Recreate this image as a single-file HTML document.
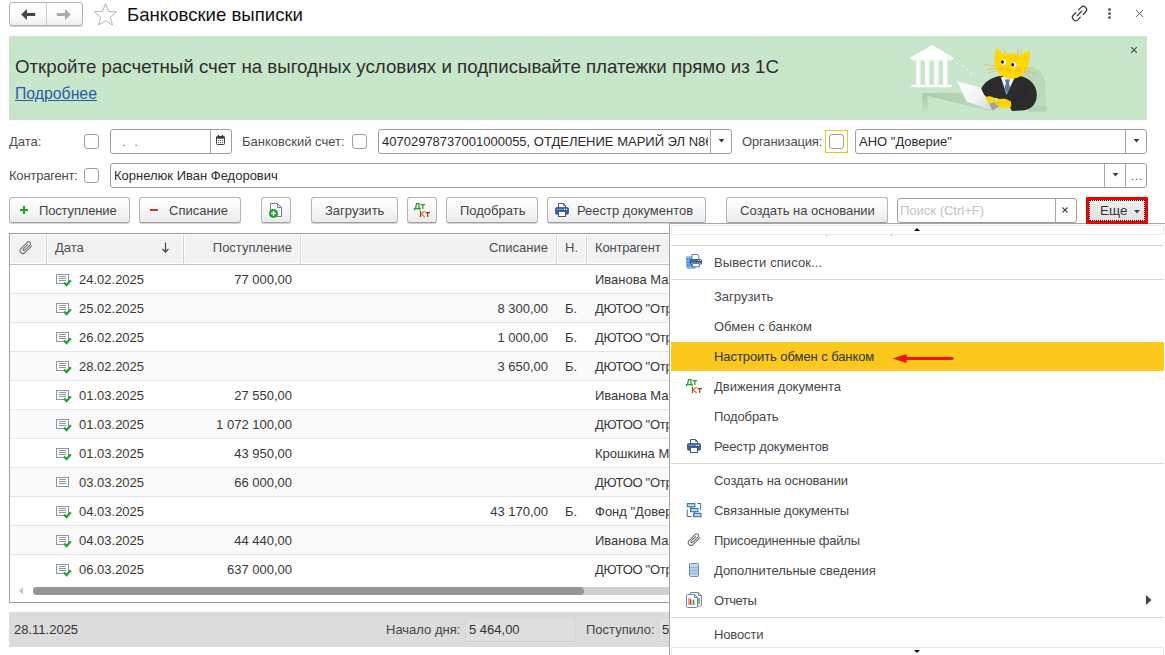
<!DOCTYPE html>
<html><head><meta charset="utf-8">
<style>
*{box-sizing:border-box;margin:0;padding:0}
html,body{width:1165px;height:655px;overflow:hidden;background:#fff}
body{font-family:"Liberation Sans",sans-serif;font-size:13px;color:#3c3c3c;position:relative}
.a{position:absolute}
.t{position:absolute;white-space:nowrap;line-height:16px;height:16px;font-size:13px;color:#4d4d4d}
.t.c{color:#383838}
.btn{position:absolute;top:197px;height:26px;border:1px solid #b4b4b4;border-bottom-color:#a2a2a2;border-radius:3px;background:linear-gradient(#ffffff,#f7f7f7 50%,#ebebeb);box-shadow:0 1px 0 #d2d2d2;line-height:24px;white-space:nowrap;font-size:13px;color:#444}
.btn span{position:absolute;top:1px}
.inp{position:absolute;height:25px;border:1px solid #9e9e9e;border-radius:3px;background:#fff}
.inp .v{position:absolute;left:3px;top:4px;line-height:16px;white-space:nowrap;overflow:hidden;font-size:13px;color:#2c2c2c}
.dv{position:absolute;top:0;width:1px;height:23px;background:#a8a8a8}
.cb{position:absolute;width:15px;height:15px;border:1px solid #9e9e9e;border-radius:3px;background:#fff}
.mi{position:absolute;left:714px;white-space:nowrap;line-height:16px;height:16px;font-size:13px;color:#484848;letter-spacing:0.05px}
.sep{position:absolute;left:671px;width:493px;height:1px;background:#d9d5c0}

</style></head><body>
<!-- title bar -->
<div class="a" style="left:9px;top:2px;width:74px;height:24px;border:1px solid #b2b2b2;border-radius:3px;background:linear-gradient(#fff,#fdfdfd 50%,#efefef);box-shadow:0 1px 0 #cfcfcf"></div>
<div class="a" style="left:46px;top:3px;width:1px;height:22px;background:#cdcdcd"></div>
<svg class="a" style="left:20px;top:8px" width="16" height="13" viewBox="0 0 16 13"><path d="M1.2 6.5L7 1v4h8.2v3H7v4z" fill="#454545"/></svg>
<svg class="a" style="left:56px;top:8px" width="16" height="13" viewBox="0 0 16 13"><path d="M14.8 6.5L9 1v4H0.8v3H9v4z" fill="#aaaaaa"/></svg>
<svg class="a" style="left:92px;top:2px" width="27" height="25" viewBox="0 0 27 25"><path d="M13.5 1.8l3 7.6 8.2 0.5-6.4 5.2 2.1 7.9-6.9-4.4-6.9 4.4 2.1-7.9-6.4-5.2 8.2-0.5z" fill="#fff" stroke="#b4b4b4" stroke-width="1"/></svg>
<div class="t" style="left:127px;top:4px;font-size:18.6px;line-height:22px;height:22px;color:#111">Банковские выписки</div>
<!-- top right icons -->
<svg class="a" style="left:1070px;top:4px;overflow:visible" width="19" height="19" viewBox="0 0 19 19"><g transform="rotate(-45 9.5 9.5)" fill="none" stroke="#3d3d3d" stroke-width="1.25" stroke-linecap="round"><path d="M7.4 6.3H4.1a3.2 3.2 0 0 0 0 6.4H7.4"/><path d="M11.6 6.3h3.3a3.2 3.2 0 0 1 0 6.4H11.6"/><path d="M6.4 9.5h6.2"/></g></svg>
<div class="a" style="left:1108px;top:8px;width:3px;height:3px;border-radius:50%;background:#666"></div>
<div class="a" style="left:1108px;top:12px;width:3px;height:3px;border-radius:50%;background:#666"></div>
<div class="a" style="left:1108px;top:16px;width:3px;height:3px;border-radius:50%;background:#666"></div>
<svg class="a" style="left:1135px;top:9px" width="9" height="9" viewBox="0 0 9 9"><path d="M1 1l7 7M8 1l-7 7" stroke="#555" stroke-width="0.9"/></svg>

<!-- banner -->
<div class="a" style="left:9px;top:36px;width:1138px;height:84px;background:#c8e6c9"></div>
<div class="t" style="left:15px;top:56px;font-size:18.72px;line-height:22px;height:22px;color:#2e2e2e">Откройте расчетный счет на выгодных условиях и подписывайте платежки прямо из 1С</div>
<div class="t" style="left:15px;top:85px;font-size:15.8px;line-height:18px;height:18px;color:#2b5aa8;text-decoration:underline">Подробнее</div>
<svg class="a" style="left:1129.5px;top:46.4px" width="8" height="8" viewBox="0 0 8 8"><path d="M1.2 1.2l5.6 5.6M6.8 1.2L1.2 6.8" stroke="#474757" stroke-width="1.15"/></svg>
<!--ILLUS_START--><svg class="a" style="left:900px;top:36px" width="160" height="84" viewBox="0 0 160 84">
<defs>
<linearGradient id="col" x1="0" x2="1" y1="0" y2="0"><stop offset="0" stop-color="#ffffff"/><stop offset="0.55" stop-color="#ffffff"/><stop offset="1" stop-color="#e3e8e3"/></linearGradient>
<linearGradient id="lap" x1="0" x2="1" y1="0" y2="1"><stop offset="0" stop-color="#ffffff"/><stop offset="0.55" stop-color="#f4f4f4"/><stop offset="1" stop-color="#d6d6d6"/></linearGradient>
<linearGradient id="leg" x1="0" x2="0" y1="0" y2="1"><stop offset="0" stop-color="#a9ccab"/><stop offset="1" stop-color="#c4e3c5"/></linearGradient>
<linearGradient id="desk" x1="0" x2="1" y1="0" y2="0"><stop offset="0" stop-color="#a9ccab"/><stop offset="1" stop-color="#bcdcbe"/></linearGradient>
</defs>
<!-- chair -->
<path d="M122 34 C134 30 143 33 145 46 L146 70 L147 75.5 L128 75.5 L124 60 Z" fill="#b9d9ba"/>
<path d="M128 70 H146.5 V75.5 H128 Z" fill="#b2d2b3"/>
<!-- desk -->
<path d="M22.5 57 H95 V75 H89 L27.5 59.8 V75.5 H22.5 Z" fill="url(#desk)"/>
<rect x="22.5" y="60" width="4.5" height="16" fill="url(#leg)"/>
<!-- bank -->
<path d="M32.3 9 L53.2 21.6 V23.4 H10.4 V21.6 Z" fill="#fff"/>
<rect x="13" y="23.4" width="38" height="1.4" fill="#f6faf6"/>
<rect x="16.2" y="24" width="4.8" height="25" fill="url(#col)"/>
<rect x="25.1" y="24" width="4.8" height="25" fill="url(#col)"/>
<rect x="34.2" y="24" width="4.8" height="25" fill="url(#col)"/>
<rect x="43.2" y="24" width="4.8" height="25" fill="url(#col)"/>
<rect x="11.3" y="48.8" width="40.6" height="2.4" fill="#fff"/>
<!-- dashed arc -->
<path d="M56.3 27.3 Q69 31 73 41.5" fill="none" stroke="#fff" stroke-width="1" stroke-dasharray="2.4 3.4"/>
<!-- suit -->
<path d="M81 53 C84 46 92 41 100 40 L116 39.5 C128 40 137 48 136.8 59 C136.6 68 132 73.5 122 74.6 L112 75 C110 72 109 69 110.5 66 L96 62 L87 61 C83.5 59 81.5 56 81 53 Z" fill="#2b2b2b"/>
<!-- shirt + tie -->
<path d="M100.8 41 L115 41 L106.6 58.6 Z" fill="#f2f2f4"/>
<path d="M104.8 43.6 L110 43.6 L109 47 L110 52 L107 57.8 L104.6 52 L106 47 Z" fill="#56799c"/>
<!-- arm lines -->
<path d="M110 66 C116 64 122 60 127 52" fill="none" stroke="#1c1c1c" stroke-width="0.7"/>
<!-- laptop -->
<path d="M57 45.2 L80.6 51.6 L91.6 74.4 L66.5 65.6 Z" fill="url(#lap)"/>
<path d="M89.2 67.6 L96.5 65.2 L100 70.6 L92.2 74.2 Z" fill="#a2a2a2"/>
<!-- paws -->
<path d="M86 61.5 C88 59.5 92 60 94.5 62.5 L95 66 L89.5 67.3 C87.5 66 86 64 86 61.5 Z" fill="#ffd500"/>
<path d="M94.8 66 C96 63 101 62 106 63 L111 65.5 L111.3 70.5 C108 72.5 103 72.5 100 71 C97 69.5 95 68 94.8 66 Z" fill="#ffd500"/>
<path d="M97 67.5 C100 66 104 66.5 106 68" fill="none" stroke="#e6b800" stroke-width="0.7"/>
<!-- head -->
<path d="M96.8 12 C98.5 13 101.5 16 103 18 C108 16.6 114 17 119.5 19.6 C122 17.6 126.5 15.4 129.8 14.8 C130.4 19 129.6 25 128 28.6 C127.6 34 124 39 118 41.6 C113 43.6 106 42.8 101.6 39.8 C97.4 37 95 32.6 94.6 28 C94 22.6 95 16 96.8 12 Z" fill="#ffd600"/>
<ellipse cx="101" cy="32.6" rx="3.4" ry="2.2" fill="#f5b82a" opacity="0.55"/>
<ellipse cx="118.4" cy="34" rx="3.6" ry="2.3" fill="#f5b82a" opacity="0.55"/>
<!-- eyes -->
<ellipse cx="103.6" cy="26.2" rx="2.6" ry="2.8" fill="#fff"/>
<ellipse cx="102.5" cy="26" rx="1.4" ry="1.8" fill="#111"/>
<ellipse cx="113.8" cy="28.8" rx="2.6" ry="2.8" fill="#fff"/>
<ellipse cx="112.7" cy="28.7" rx="1.4" ry="1.8" fill="#111"/>
<!-- nose/mouth -->
<path d="M107 30.6 l1.6 0.3 l-1 1.1 z" fill="#e89a2a"/>
<path d="M106 33.4 q1.6 1 2 -0.6 q0.6 1.8 2.6 1" fill="none" stroke="#e0a020" stroke-width="0.5"/>
<!-- whiskers -->
<g stroke="#f0a64a" stroke-width="0.6" fill="none" stroke-linecap="round">
<path d="M94.8 29.8 L84 28.6"/><path d="M95 32.4 L86.8 33.8"/><path d="M96 34.4 L89 36.8"/>
<path d="M124.4 32.4 L134 31.4"/><path d="M124.4 34.4 L134 37"/><path d="M123.8 36.4 L130.6 40.6"/>
<path d="M105 16.6 L103.6 11.6"/><path d="M117.4 18 L118.2 11"/><path d="M118.8 18.6 L121.6 12.6"/>
</g>
</svg>
<!--ILLUS_END-->

<!-- filter row 1 -->
<div class="t" style="left:9px;top:134px">Дата:</div>
<div class="cb" style="left:84px;top:134px"></div>
<div class="inp" style="left:110px;top:129px;width:122px"><div class="v" style="left:11px;top:4px;color:#777;letter-spacing:0.5px">.&nbsp;&nbsp;.</div><div class="dv" style="left:99px"></div>
<svg class="a" style="left:105px;top:5px" width="9" height="10" viewBox="0 0 9 10"><rect x="0.5" y="1.5" width="8" height="8" rx="1" fill="#fff" stroke="#3c3c3c"/><rect x="0.5" y="1.5" width="8" height="2.2" fill="#3c3c3c"/><path d="M2.5 0v2M6.5 0v2" stroke="#3c3c3c" stroke-width="1.3"/><g fill="#444"><circle cx="2.5" cy="5.6" r="0.6"/><circle cx="4.5" cy="5.6" r="0.6"/><circle cx="6.5" cy="5.6" r="0.6"/><circle cx="2.5" cy="7.6" r="0.6"/><circle cx="4.5" cy="7.6" r="0.6"/><circle cx="6.5" cy="7.6" r="0.6"/></g></svg></div>
<div class="t" style="left:242px;top:134px">Банковский счет:</div>
<div class="cb" style="left:352px;top:134px"></div>
<div class="inp" style="left:378px;top:129px;width:354px"><div class="v" style="width:326px">40702978737001000055, ОТДЕЛЕНИЕ МАРИЙ ЭЛ N8614 ПАО СБЕРБАНК</div><div class="dv" style="left:331px"></div><svg class="a" style="left:339px;top:9px" width="7" height="4" viewBox="0 0 7 4"><path d="M0.6 0h5.8L3.5 3.6z" fill="#3c3c3c"/></svg></div>
<div class="t" style="left:742px;top:134px;letter-spacing:-0.15px">Организация:</div>
<div class="a" style="left:825px;top:130px;width:23px;height:23px;border:1px solid #f3c01d"></div>
<div class="cb" style="left:829px;top:134px"></div>
<div class="inp" style="left:855px;top:129px;width:292px"><div class="v">АНО "Доверие"</div><div class="dv" style="left:269px"></div><svg class="a" style="left:277px;top:9px" width="7" height="4" viewBox="0 0 7 4"><path d="M0.6 0h5.8L3.5 3.6z" fill="#3c3c3c"/></svg></div>

<!-- filter row 2 -->
<div class="t" style="left:9px;top:168px;letter-spacing:-0.2px">Контрагент:</div>
<div class="cb" style="left:84px;top:168px"></div>
<div class="inp" style="left:110px;top:163px;width:1037px"><div class="v">Корнелюк Иван Федорович</div><div class="dv" style="left:993px"></div><div class="dv" style="left:1014px"></div><svg class="a" style="left:1001px;top:9px" width="7" height="4" viewBox="0 0 7 4"><path d="M0.6 0h5.8L3.5 3.6z" fill="#3c3c3c"/></svg><div class="a" style="left:1020px;top:4px;font-size:11px;line-height:16px;color:#444;letter-spacing:1px">...</div></div>

<!-- buttons -->
<div class="btn" style="left:9px;width:121px"><svg class="a" style="left:10px;top:8px" width="8" height="8" viewBox="0 0 8 8"><path d="M4 0v8M0 4h8" stroke="#1fa02a" stroke-width="2"/></svg><span style="left:29px;letter-spacing:-0.15px">Поступление</span></div>
<div class="btn" style="left:139px;width:102px"><div class="a" style="left:10px;top:11px;width:8px;height:2px;background:#d8322a"></div><span style="left:29px">Списание</span></div>
<div class="btn" style="left:261px;width:30px"><svg class="a" style="left:3px;top:4px" width="20" height="17" viewBox="0 0 20 17"><path d="M5.5 1.5h7l4 4v9h-11z" fill="#fff" stroke="#6f7c9c"/><path d="M12.5 1.5v4h4" fill="none" stroke="#6f7c9c"/><circle cx="8.5" cy="11.4" r="4.5" fill="#20a22c"/><path d="M8.5 8.9v5M6 11.4h5" stroke="#fff" stroke-width="1.4"/></svg></div>
<div class="btn" style="left:311px;width:87px"><span style="left:13px">Загрузить</span></div>
<div class="btn" style="left:407px;width:30px"><svg class="a" style="left:5px;top:4px" width="18" height="16" viewBox="0 0 18 16"><g fill="none" stroke="#1fa02a" stroke-width="1.25"><path d="M2.4 6.6L3.6 1.6H6V6.6"/><path d="M1.4 8.2V6.6H7V8.2"/><path d="M7.6 2.7H12.1M9.85 2.7V7"/></g><g fill="none" stroke-width="1.25"><path d="M7.5 9V15" stroke="#a5332f"/><path d="M11.6 9L8.2 12L11.8 15" stroke="#cf8420"/><path d="M12.4 10.5H17M14.7 10.5V15" stroke="#a5332f"/></g></svg></div>
<div class="btn" style="left:446px;width:92px"><span style="left:13px">Подобрать</span></div>
<div class="btn" style="left:547px;width:159px"><svg class="a" style="left:7px;top:5px" width="14" height="14" viewBox="0 0 14 14"><path d="M3.5 0.5h5l2 2v3h-7z" fill="#fff" stroke="#46557f"/><path d="M8.5 0.5v2h2" fill="none" stroke="#46557f" stroke-width="0.8"/><rect x="0.4" y="4.6" width="13.2" height="6.6" rx="1.4" fill="#33639c" stroke="#2f4c7c" stroke-width="0.8"/><rect x="1.6" y="5.6" width="10.8" height="1.4" fill="#5d90c4"/><rect x="9" y="5.8" width="1" height="1" fill="#fff"/><rect x="11" y="5.8" width="1" height="1" fill="#fff"/><rect x="3.5" y="8.4" width="7" height="5.1" fill="#fff" stroke="#46557f"/></svg><span style="left:29px">Реестр документов</span></div>
<div class="btn" style="left:726px;width:162px"><span style="left:13px">Создать на основании</span></div>
<div class="inp" style="left:897px;top:198px;width:180px"><div class="v" style="left:2px;color:#c2c2c2">Поиск (Ctrl+F)</div><div class="dv" style="left:157px"></div><svg class="a" style="left:164.3px;top:7.5px" width="6" height="6" viewBox="0 0 6 6"><path d="M0.5 0.5l5 5M5.5 0.5L0.5 5.5" stroke="#4a4a4a" stroke-width="1.1"/></svg></div>
<!-- Еще -->
<div class="a" style="left:1086px;top:197px;width:62px;height:27px;background:#f10000;border-radius:1px;z-index:5"></div>
<div class="a" style="left:1089px;top:200px;width:56px;height:21px;background:linear-gradient(#eeeeee,#e2e2e2);border:1px dotted #111;z-index:6"></div>
<div class="t" style="left:1100px;top:203px;font-size:13.5px;color:#333;z-index:7">Еще</div>
<svg class="a" style="left:1134px;top:210px;z-index:7" width="6" height="4" viewBox="0 0 6 4"><path d="M0 0h6L3 3.6z" fill="#444"/></svg>

<!-- table -->
<div class="a" style="left:9px;top:233px;width:700px;height:370px;border:1px solid #a0a0a0;border-top-color:#9a9a9a;background:#fff"></div>
<div class="a" style="left:10px;top:234px;width:690px;height:30px;background:#f2f2f2;border:1px solid #fff"></div>
<div class="a" style="left:10px;top:264px;width:690px;height:1px;background:#c4c4c4"></div>
<div class="a" style="left:45px;top:234px;width:3px;height:30px;background:#fff"></div><div class="a" style="left:46px;top:235px;width:1px;height:29px;background:#d0d0d0"></div>
<div class="a" style="left:182px;top:234px;width:3px;height:30px;background:#fff"></div><div class="a" style="left:183px;top:235px;width:1px;height:29px;background:#d0d0d0"></div>
<div class="a" style="left:299px;top:234px;width:3px;height:30px;background:#fff"></div><div class="a" style="left:300px;top:235px;width:1px;height:29px;background:#d0d0d0"></div>
<div class="a" style="left:555px;top:234px;width:3px;height:30px;background:#fff"></div><div class="a" style="left:556px;top:235px;width:1px;height:29px;background:#d0d0d0"></div>
<div class="a" style="left:585px;top:234px;width:3px;height:30px;background:#fff"></div><div class="a" style="left:586px;top:235px;width:1px;height:29px;background:#d0d0d0"></div>
<div class="t" style="left:55px;top:240px">Дата</div>
<div class="t" style="left:200px;top:240px;width:92px;text-align:right">Поступление</div>
<div class="t" style="left:456px;top:240px;width:92px;text-align:right">Списание</div>
<div class="t" style="left:565px;top:240px">Н.</div>
<div class="t" style="left:595px;top:240px;letter-spacing:-0.18px">Контрагент</div>
<svg class="a" style="left:161px;top:242px" width="9" height="12" viewBox="0 0 9 12"><path d="M4.5 0.5v9M1.5 6.8l3 3.2 3-3.2" stroke="#444" stroke-width="1.2" fill="none"/></svg>
<svg class="a" style="left:19px;top:240px" width="16" height="16" viewBox="0 0 16 16"><g transform="translate(7 7.5) rotate(-45) scale(0.9)" fill="none" stroke="#6f6f6f" stroke-width="1.15" stroke-linecap="round"><path d="M3.4 -1H-3.4a1.1 1.1 0 0 0 0 2.2H4.9a2.1 2.1 0 0 0 0 -4.2H-4.9a3.1 3.1 0 0 0 0 6.2H5.6"/></g></svg>
<div class="a" style="left:10px;top:265px;width:690px;height:28px;background:#fff"></div>
<div class="a" style="left:10px;top:293px;width:690px;height:1px;background:#e6e6e6"></div>
<svg class="a" style="left:56px;top:274px" width="16" height="13" viewBox="0 0 16 13"><rect x="0.5" y="0.5" width="12" height="9" fill="#fff" stroke="#8d96a3"/><path d="M3 2.5h7M3 4.5h7M3 6.5h7" stroke="#8d96a3" fill="none"/><path d="M8 8.4l2.6 2.8 4.2-4.9" stroke="#22a033" stroke-width="2.2" fill="none"/></svg>
<div class="t c" style="left:79px;top:272px">24.02.2025</div>
<div class="t c" style="left:192px;top:272px;width:100px;text-align:right">77 000,00</div>
<div class="t c" style="left:595px;top:272px">Иванова Ма</div>
<div class="a" style="left:10px;top:294px;width:690px;height:28px;background:#fafafa"></div>
<div class="a" style="left:10px;top:322px;width:690px;height:1px;background:#e6e6e6"></div>
<svg class="a" style="left:56px;top:303px" width="16" height="13" viewBox="0 0 16 13"><rect x="0.5" y="0.5" width="12" height="9" fill="#fff" stroke="#8d96a3"/><path d="M3 2.5h7M3 4.5h7M3 6.5h7" stroke="#8d96a3" fill="none"/><path d="M8 8.4l2.6 2.8 4.2-4.9" stroke="#22a033" stroke-width="2.2" fill="none"/></svg>
<div class="t c" style="left:79px;top:301px">25.02.2025</div>
<div class="t c" style="left:448px;top:301px;width:100px;text-align:right">8 300,00</div>
<div class="t c" style="left:565px;top:301px">Б.</div>
<div class="t c" style="left:595px;top:301px;letter-spacing:-0.3px">ДЮТОО "Отр</div>
<div class="a" style="left:10px;top:323px;width:690px;height:28px;background:#fff"></div>
<div class="a" style="left:10px;top:351px;width:690px;height:1px;background:#e6e6e6"></div>
<svg class="a" style="left:56px;top:332px" width="16" height="13" viewBox="0 0 16 13"><rect x="0.5" y="0.5" width="12" height="9" fill="#fff" stroke="#8d96a3"/><path d="M3 2.5h7M3 4.5h7M3 6.5h7" stroke="#8d96a3" fill="none"/><path d="M8 8.4l2.6 2.8 4.2-4.9" stroke="#22a033" stroke-width="2.2" fill="none"/></svg>
<div class="t c" style="left:79px;top:330px">26.02.2025</div>
<div class="t c" style="left:448px;top:330px;width:100px;text-align:right">1 000,00</div>
<div class="t c" style="left:565px;top:330px">Б.</div>
<div class="t c" style="left:595px;top:330px;letter-spacing:-0.3px">ДЮТОО "Отр</div>
<div class="a" style="left:10px;top:352px;width:690px;height:28px;background:#fafafa"></div>
<div class="a" style="left:10px;top:380px;width:690px;height:1px;background:#e6e6e6"></div>
<svg class="a" style="left:56px;top:361px" width="16" height="13" viewBox="0 0 16 13"><rect x="0.5" y="0.5" width="12" height="9" fill="#fff" stroke="#8d96a3"/><path d="M3 2.5h7M3 4.5h7M3 6.5h7" stroke="#8d96a3" fill="none"/><path d="M8 8.4l2.6 2.8 4.2-4.9" stroke="#22a033" stroke-width="2.2" fill="none"/></svg>
<div class="t c" style="left:79px;top:359px">28.02.2025</div>
<div class="t c" style="left:448px;top:359px;width:100px;text-align:right">3 650,00</div>
<div class="t c" style="left:565px;top:359px">Б.</div>
<div class="t c" style="left:595px;top:359px;letter-spacing:-0.3px">ДЮТОО "Отр</div>
<div class="a" style="left:10px;top:381px;width:690px;height:28px;background:#fff"></div>
<div class="a" style="left:10px;top:409px;width:690px;height:1px;background:#e6e6e6"></div>
<svg class="a" style="left:56px;top:390px" width="16" height="13" viewBox="0 0 16 13"><rect x="0.5" y="0.5" width="12" height="9" fill="#fff" stroke="#8d96a3"/><path d="M3 2.5h7M3 4.5h7M3 6.5h7" stroke="#8d96a3" fill="none"/><path d="M8 8.4l2.6 2.8 4.2-4.9" stroke="#22a033" stroke-width="2.2" fill="none"/></svg>
<div class="t c" style="left:79px;top:388px">01.03.2025</div>
<div class="t c" style="left:192px;top:388px;width:100px;text-align:right">27 550,00</div>
<div class="t c" style="left:595px;top:388px">Иванова Ма</div>
<div class="a" style="left:10px;top:410px;width:690px;height:28px;background:#fafafa"></div>
<div class="a" style="left:10px;top:438px;width:690px;height:1px;background:#e6e6e6"></div>
<svg class="a" style="left:56px;top:419px" width="16" height="13" viewBox="0 0 16 13"><rect x="0.5" y="0.5" width="12" height="9" fill="#fff" stroke="#8d96a3"/><path d="M3 2.5h7M3 4.5h7M3 6.5h7" stroke="#8d96a3" fill="none"/><path d="M8 8.4l2.6 2.8 4.2-4.9" stroke="#22a033" stroke-width="2.2" fill="none"/></svg>
<div class="t c" style="left:79px;top:417px">01.03.2025</div>
<div class="t c" style="left:192px;top:417px;width:100px;text-align:right">1 072 100,00</div>
<div class="t c" style="left:595px;top:417px;letter-spacing:-0.3px">ДЮТОО "Отр</div>
<div class="a" style="left:10px;top:439px;width:690px;height:28px;background:#fff"></div>
<div class="a" style="left:10px;top:467px;width:690px;height:1px;background:#e6e6e6"></div>
<svg class="a" style="left:56px;top:448px" width="16" height="13" viewBox="0 0 16 13"><rect x="0.5" y="0.5" width="12" height="9" fill="#fff" stroke="#8d96a3"/><path d="M3 2.5h7M3 4.5h7M3 6.5h7" stroke="#8d96a3" fill="none"/><path d="M8 8.4l2.6 2.8 4.2-4.9" stroke="#22a033" stroke-width="2.2" fill="none"/></svg>
<div class="t c" style="left:79px;top:446px">01.03.2025</div>
<div class="t c" style="left:192px;top:446px;width:100px;text-align:right">43 950,00</div>
<div class="t c" style="left:595px;top:446px">Крошкина М</div>
<div class="a" style="left:10px;top:468px;width:690px;height:28px;background:#fafafa"></div>
<div class="a" style="left:10px;top:496px;width:690px;height:1px;background:#e6e6e6"></div>
<svg class="a" style="left:56px;top:477px" width="16" height="13" viewBox="0 0 16 13"><rect x="0.5" y="0.5" width="12" height="9" fill="#fff" stroke="#8d96a3"/><path d="M3 2.5h7M3 4.5h7M3 6.5h7" stroke="#8d96a3" fill="none"/></svg>
<div class="t c" style="left:79px;top:475px">03.03.2025</div>
<div class="t c" style="left:192px;top:475px;width:100px;text-align:right">66 000,00</div>
<div class="t c" style="left:595px;top:475px;letter-spacing:-0.3px">ДЮТОО "Отр</div>
<div class="a" style="left:10px;top:497px;width:690px;height:28px;background:#fff"></div>
<div class="a" style="left:10px;top:525px;width:690px;height:1px;background:#e6e6e6"></div>
<svg class="a" style="left:56px;top:506px" width="16" height="13" viewBox="0 0 16 13"><rect x="0.5" y="0.5" width="12" height="9" fill="#fff" stroke="#8d96a3"/><path d="M3 2.5h7M3 4.5h7M3 6.5h7" stroke="#8d96a3" fill="none"/><path d="M8 8.4l2.6 2.8 4.2-4.9" stroke="#22a033" stroke-width="2.2" fill="none"/></svg>
<div class="t c" style="left:79px;top:504px">04.03.2025</div>
<div class="t c" style="left:448px;top:504px;width:100px;text-align:right">43 170,00</div>
<div class="t c" style="left:565px;top:504px">Б.</div>
<div class="t c" style="left:595px;top:504px">Фонд "Довер</div>
<div class="a" style="left:10px;top:526px;width:690px;height:28px;background:#fafafa"></div>
<div class="a" style="left:10px;top:554px;width:690px;height:1px;background:#e6e6e6"></div>
<svg class="a" style="left:56px;top:535px" width="16" height="13" viewBox="0 0 16 13"><rect x="0.5" y="0.5" width="12" height="9" fill="#fff" stroke="#8d96a3"/><path d="M3 2.5h7M3 4.5h7M3 6.5h7" stroke="#8d96a3" fill="none"/><path d="M8 8.4l2.6 2.8 4.2-4.9" stroke="#22a033" stroke-width="2.2" fill="none"/></svg>
<div class="t c" style="left:79px;top:533px">04.03.2025</div>
<div class="t c" style="left:192px;top:533px;width:100px;text-align:right">44 440,00</div>
<div class="t c" style="left:595px;top:533px">Иванова Ма</div>
<div class="a" style="left:10px;top:555px;width:690px;height:28px;background:#fff"></div>
<svg class="a" style="left:56px;top:564px" width="16" height="13" viewBox="0 0 16 13"><rect x="0.5" y="0.5" width="12" height="9" fill="#fff" stroke="#8d96a3"/><path d="M3 2.5h7M3 4.5h7M3 6.5h7" stroke="#8d96a3" fill="none"/><path d="M8 8.4l2.6 2.8 4.2-4.9" stroke="#22a033" stroke-width="2.2" fill="none"/></svg>
<div class="t c" style="left:79px;top:562px">06.03.2025</div>
<div class="t c" style="left:192px;top:562px;width:100px;text-align:right">637 000,00</div>
<div class="t c" style="left:595px;top:562px;letter-spacing:-0.3px">ДЮТОО "Отр</div>
<div class="a" style="left:33px;top:587px;width:680px;height:8px;background:#cfcfcf;border-radius:4px"></div>
<div class="a" style="left:33px;top:587px;width:551px;height:8px;background:#959595;border-radius:4px"></div>
<svg class="a" style="left:18px;top:587px" width="6" height="8" viewBox="0 0 6 8"><path d="M5 0.5v7L0.8 4z" fill="#c4c4c4"/></svg>
<div class="a" style="left:9px;top:612px;width:700px;height:35px;background:#dcdcdc"></div>
<div class="t" style="left:14px;top:622px;color:#333">28.11.2025</div>
<div class="t" style="left:386px;top:622px;color:#444">Начало дня:</div>
<div class="a" style="left:465px;top:617px;width:111px;height:25px;border:1px solid #d5d5d5;border-radius:3px;background:#dedede"></div>
<div class="t" style="left:469px;top:622px;color:#333">5 464,00</div>
<div class="t" style="left:586px;top:622px;color:#444">Поступило:</div>
<div class="a" style="left:658px;top:617px;width:60px;height:25px;border:1px solid #d5d5d5;border-radius:3px;background:#dedede"></div>
<div class="t" style="left:662px;top:622px;color:#333">5</div>
<!-- popup menu -->
<div class="a" style="left:669px;top:223px;width:500px;height:440px;background:#fff;border:1px solid #a6a6a6"></div>
<div class="a" style="left:671px;top:225px;width:493px;height:10px;border:1px solid #e9e9e9;border-radius:2px;background:#fff"></div>
<svg class="a" style="left:914px;top:228px" width="6" height="3" viewBox="0 0 6 3"><path d="M0 3h6L3 0z" fill="#111"/></svg><div class="a" style="left:826px;top:235px;width:1px;height:1px;background:#999"></div><div class="a" style="left:891px;top:235px;width:1px;height:1px;background:#999"></div>
<div class="sep" style="top:245px"></div>
<div class="sep" style="top:279px"></div>
<div class="sep" style="top:463px"></div>
<div class="sep" style="top:617px"></div>
<div class="a" style="left:671px;top:342px;width:493px;height:29px;background:#fbc91d"></div>
<div class="mi" style="top:255px;letter-spacing:0.1px">Вывести список...</div>
<div class="mi" style="top:289px;letter-spacing:0px">Загрузить</div>
<div class="mi" style="top:319px;letter-spacing:0px">Обмен с банком</div>
<div class="mi" style="top:349px;color:#333;letter-spacing:-0.08px">Настроить обмен с банком</div>
<div class="mi" style="top:379px;letter-spacing:-0.02px">Движения документа</div>
<div class="mi" style="top:409px;letter-spacing:-0.12px">Подобрать</div>
<div class="mi" style="top:439px;letter-spacing:-0.09px">Реестр документов</div>
<div class="mi" style="top:473px;letter-spacing:-0.04px">Создать на основании</div>
<div class="mi" style="top:503px;letter-spacing:-0.08px">Связанные документы</div>
<div class="mi" style="top:533px;letter-spacing:-0.24px">Присоединенные файлы</div>
<div class="mi" style="top:563px;letter-spacing:-0.06px">Дополнительные сведения</div>
<div class="mi" style="top:593px;letter-spacing:-0.43px">Отчеты</div>
<div class="mi" style="top:627px;letter-spacing:-0.14px">Новости</div>
<!-- red arrow -->
<svg class="a" style="left:891px;top:351px" width="64" height="15" viewBox="0 0 64 15"><path d="M1.4 7.5L15.6 3v9z" fill="#f01414"/><path d="M14 7.5H61.2" stroke="#f01414" stroke-width="2.8" stroke-linecap="round"/></svg>
<!-- submenu arrow -->
<svg class="a" style="left:1146px;top:595px" width="6" height="10" viewBox="0 0 6 10"><path d="M0 0v10l5.5-5z" fill="#444"/></svg>
<!-- bottom scroll -->
<div class="a" style="left:671px;top:647px;width:493px;height:12px;border:1px solid #e9e9e9;border-radius:2px;background:#fff"></div>
<svg class="a" style="left:914px;top:650px" width="6" height="3" viewBox="0 0 6 3"><path d="M0 0h6L3 3z" fill="#111"/></svg>
<!--MI_START--><svg class="a" style="left:686px;top:254px" width="17" height="15" viewBox="0 0 17 15"><rect x="0.3" y="2.2" width="9.4" height="12.5" rx="1" fill="#6fb4ee"/><path d="M0.3 5.2h9.4M0.3 8.2h9.4M0.3 11.2h9.4" stroke="#1f5fae" stroke-width="0.9" stroke-dasharray="1.6 0.8"/><g transform="translate(-0.6 0)"><path d="M6.5 0.5h5.5l1.5 1.5v3.5h-7z" fill="#fff" stroke="#566788" stroke-width="0.9"/><rect x="4.4" y="5.2" width="12.2" height="5.2" rx="1.5" fill="#2d4d80"/><rect x="5.8" y="6.2" width="6" height="1" fill="#4f86c2"/><rect x="12.6" y="6" width="1" height="1" fill="#fff"/><rect x="14.4" y="6" width="1" height="1" fill="#fff"/><path d="M5.6 9.2h9.8" stroke="#e8eef6" stroke-width="1"/><rect x="6.9" y="9.6" width="7" height="3.2" fill="#fff" stroke="#566788" stroke-width="0.9"/></g></svg>
<svg class="a" style="left:685px;top:378px" width="18" height="16" viewBox="0 0 18 16"><g fill="none" stroke="#1fa02a" stroke-width="1.25"><path d="M2.4 6.6L3.6 1.6H6V6.6"/><path d="M1.4 8.2V6.6H7V8.2"/><path d="M7.6 2.7H12.1M9.85 2.7V7"/></g><g fill="none" stroke-width="1.25"><path d="M7.5 9V15" stroke="#a5332f"/><path d="M11.6 9L8.2 12L11.8 15" stroke="#cf8420"/><path d="M12.4 10.5H17M14.7 10.5V15" stroke="#a5332f"/></g></svg>
<svg class="a" style="left:687px;top:439px" width="14" height="14" viewBox="0 0 14 14"><path d="M3.5 0.5h5l2 2v3h-7z" fill="#fff" stroke="#46557f"/><path d="M8.5 0.5v2h2" fill="none" stroke="#46557f" stroke-width="0.8"/><rect x="0.4" y="4.6" width="13.2" height="6.6" rx="1.4" fill="#33639c" stroke="#2f4c7c" stroke-width="0.8"/><rect x="1.6" y="5.6" width="10.8" height="1.4" fill="#5d90c4"/><rect x="9" y="5.8" width="1" height="1" fill="#fff"/><rect x="11" y="5.8" width="1" height="1" fill="#fff"/><rect x="3.5" y="8.4" width="7" height="5.1" fill="#fff" stroke="#46557f"/></svg>
<svg class="a" style="left:686px;top:502px" width="16" height="16" viewBox="0 0 16 16"><g fill="none" stroke="#2f74ad" stroke-width="1"><path d="M11.5 1.5h3.2v6.5"/><path d="M1.2 7.5v7h4"/><path d="M5 4.8v1.8h2M8.6 9.8v1.7h1.8"/></g><g fill="#c3d6e8" stroke="#2a68a6" stroke-width="1"><rect x="1.3" y="1.6" width="7.6" height="3.2"/><rect x="4.6" y="6.4" width="7.4" height="3.3"/><rect x="7.6" y="11.3" width="7.4" height="3.4"/></g></svg>
<svg class="a" style="left:686px;top:531px" width="16" height="16" viewBox="0 0 16 16"><g transform="translate(8.1 8.4) rotate(-45) scale(0.9)" fill="none" stroke="#6a6a6a" stroke-width="1.15" stroke-linecap="round"><path d="M3.4 -1H-3.4a1.1 1.1 0 0 0 0 2.2H4.9a2.1 2.1 0 0 0 0 -4.2H-4.9a3.1 3.1 0 0 0 0 6.2H5.6"/></g></svg>
<svg class="a" style="left:688px;top:562px" width="12" height="16" viewBox="0 0 12 16"><rect x="1.5" y="1.5" width="9" height="13" rx="1" fill="#eef3f9" stroke="#6b8db6"/><rect x="2" y="2" width="8" height="2.6" fill="#c3d6ea"/><path d="M2 5.3h8M2 8.3h8M2 11.3h8" stroke="#8aa2c2" stroke-width="1"/><path d="M2 6.9h8M2 9.9h8M2 12.9h8" stroke="#62aaf0" stroke-width="1" stroke-dasharray="1.6 0.5"/></svg>
<svg class="a" style="left:685px;top:591px" width="18" height="18" viewBox="0 0 18 18"><path d="M5.8 1.5h7.6l3 3v9.6a1 1 0 0 1-1 1h-9.6z" fill="#fff" stroke="#6d86a8"/><path d="M13.4 1.5v3h3" fill="none" stroke="#6d86a8"/><path d="M14 7v5" stroke="#2fa04a" stroke-width="1.4"/><path d="M13 12.5h2.5" stroke="#8a8a8a" stroke-width="0.7"/><path d="M2.5 3.5h7l3 3v9a1 1 0 0 1-1 1h-9a1 1 0 0 1-1-1v-11a1 1 0 0 1 1-1z" fill="#fff" stroke="#6d86a8"/><path d="M9.5 3.5v3h3" fill="none" stroke="#6d86a8"/><path d="M3.6 7v6.6h6.6" fill="none" stroke="#8a8a8a" stroke-width="0.7"/><path d="M5.3 7.6v5.6" stroke="#ee2a1a" stroke-width="1.5"/><path d="M6.9 9v4.2" stroke="#f0a030" stroke-width="1"/><path d="M8.6 8.6v4.6" stroke="#2fa04a" stroke-width="1.5"/></svg><!--MI_END-->

</body></html>
